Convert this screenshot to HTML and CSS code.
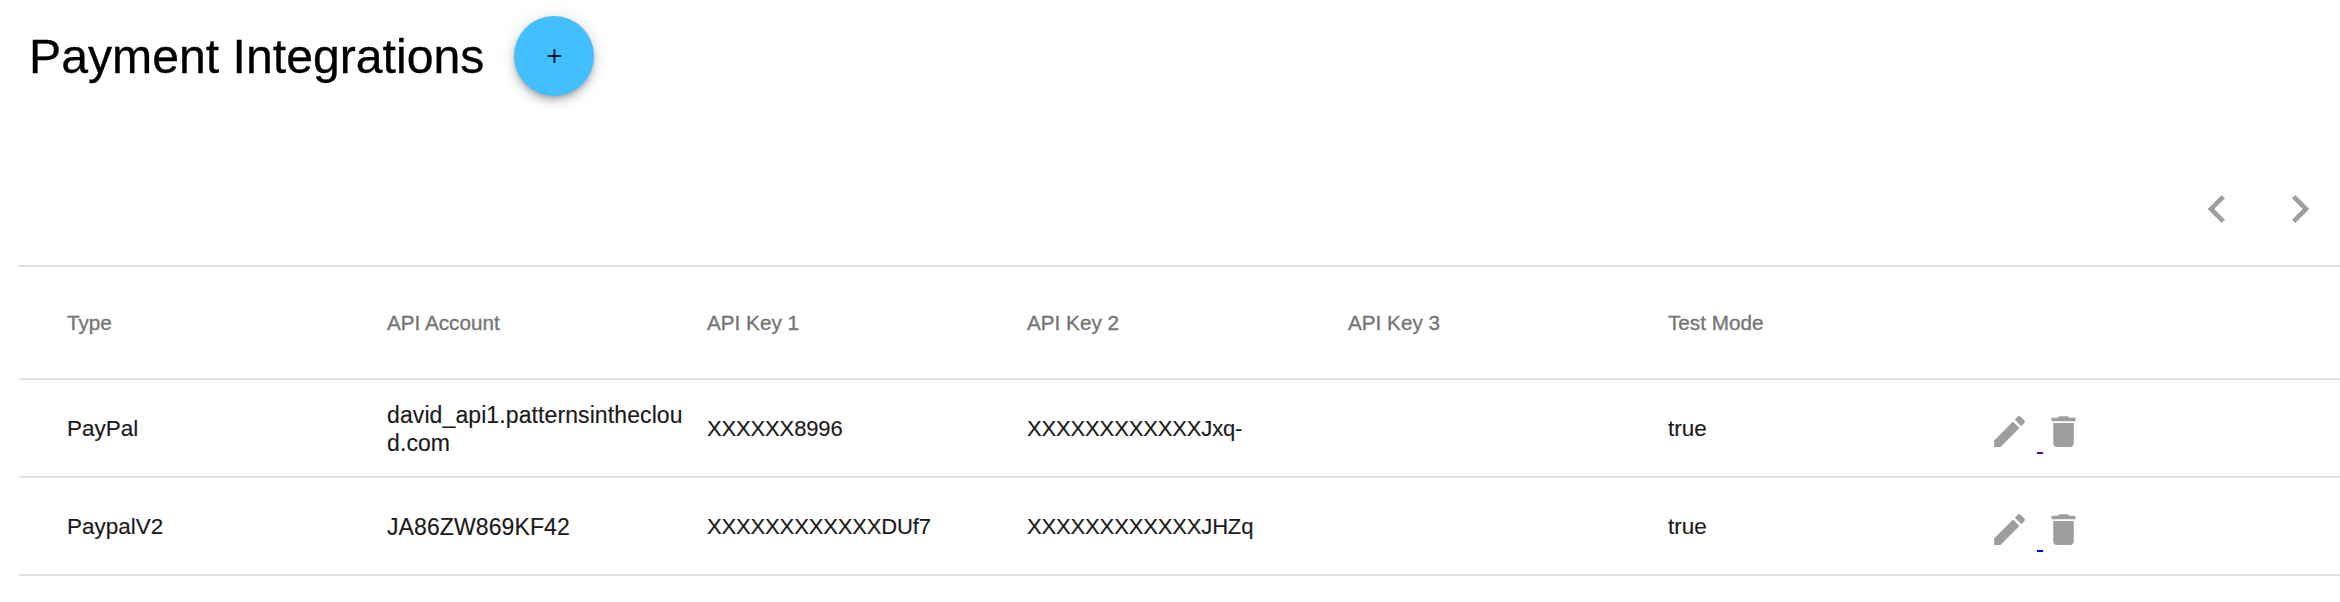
FILE: index.html
```html
<!DOCTYPE html>
<html lang="en">
<head>
    <meta charset="UTF-8">
    <meta name="viewport" content="width=device-width, initial-scale=1.0">
    <title>Payment Integrations</title>
    <link rel="stylesheet" href="styles.css">
</head>
<body>
    <div class="page">
        <div class="page-header">
            <h1>Payment Integrations</h1>
            <button class="fab">+</button>
        </div>
        <div class="pager">
            <svg class="pager-icon" viewBox="0 0 24 24"><path d="M15.41 7.41L14 6l-6 6 6 6 1.41-1.41L10.83 12z"/></svg>
            <svg class="pager-icon" viewBox="0 0 24 24"><path d="M10 6L8.59 7.41 13.17 12l-4.58 4.59L10 18l6-6z"/></svg>
        </div>
        <table class="integrations">
            <thead>
                <tr>
                    <th>Type</th>
                    <th>API Account</th>
                    <th>API Key 1</th>
                    <th>API Key 2</th>
                    <th>API Key 3</th>
                    <th>Test Mode</th>
                    <th></th>
                </tr>
            </thead>
            <tbody>
                <tr>
                    <td>PayPal</td>
                    <td class="account">david_api1.patternsinthecloud.com</td>
                    <td class="key">XXXXXX8996</td>
                    <td class="key">XXXXXXXXXXXXJxq-</td>
                    <td></td>
                    <td>true</td>
                    <td>
                        <div class="actions">
                            <svg class="action-icon" viewBox="0 0 24 24"><path d="M3 17.25V21h3.75L17.81 9.94l-3.75-3.75L3 17.25zM20.71 7.04c.39-.39.39-1.02 0-1.41l-2.34-2.34c-.39-.39-1.02-.39-1.41 0l-1.83 1.83 3.75 3.75 1.83-1.83z"/></svg>
                            <a class="action-link visited" href="#">&nbsp;</a>
                            <svg class="action-icon" viewBox="0 0 24 24"><path d="M6 19c0 1.1.9 2 2 2h8c1.1 0 2-.9 2-2V7H6v12zM19 4h-3.5l-1-1h-5l-1 1H5v2h14V4z"/></svg>
                        </div>
                    </td>
                </tr>
                <tr>
                    <td>PaypalV2</td>
                    <td class="account">JA86ZW869KF42</td>
                    <td class="key">XXXXXXXXXXXXDUf7</td>
                    <td class="key">XXXXXXXXXXXXJHZq</td>
                    <td></td>
                    <td>true</td>
                    <td>
                        <div class="actions">
                            <svg class="action-icon" viewBox="0 0 24 24"><path d="M3 17.25V21h3.75L17.81 9.94l-3.75-3.75L3 17.25zM20.71 7.04c.39-.39.39-1.02 0-1.41l-2.34-2.34c-.39-.39-1.02-.39-1.41 0l-1.83 1.83 3.75 3.75 1.83-1.83z"/></svg>
                            <a class="action-link" href="#">&nbsp;</a>
                            <svg class="action-icon" viewBox="0 0 24 24"><path d="M6 19c0 1.1.9 2 2 2h8c1.1 0 2-.9 2-2V7H6v12zM19 4h-3.5l-1-1h-5l-1 1H5v2h14V4z"/></svg>
                        </div>
                    </td>
                </tr>
            </tbody>
        </table>
    </div>
</body>
</html>
```
FILE: styles.css
```css
body {
    margin: 0;
    background-color: #fff;
    color: #000;
    font-family: "Liberation Sans", Arial, sans-serif;
}

.page {
    padding-left: 19px;
}

.page-header {
    display: flex;
    align-items: center;
    gap: 30px;
    height: 112px;
    padding-left: 10px;
}

.page-header h1 {
    margin: 0;
    font-size: 48.2px;
    font-weight: 400;
    -webkit-text-stroke: 0.3px #000;
}

.fab {
    width: 80px;
    height: 80px;
    padding: 0;
    border: none;
    border-radius: 50%;
    background-color: #42bfff;
    color: rgba(0, 0, 0, 0.87);
    font-family: inherit;
    font-size: 28px;
    box-shadow: 0 3px 5px -1px rgba(0, 0, 0, 0.2), 0 6px 10px 0 rgba(0, 0, 0, 0.14), 0 1px 18px 0 rgba(0, 0, 0, 0.12);
}

.pager {
    display: flex;
    justify-content: flex-end;
    gap: 27px;
    height: 153px;
    padding-right: 12px;
    padding-top: 69px;
    box-sizing: border-box;
}

.pager-icon {
    width: 56px;
    height: 56px;
    fill: #9e9e9e;
}

.integrations {
    width: 2321px;
    table-layout: fixed;
    border-collapse: collapse;
    border-top: 2px solid #e0e0e0;
}

.integrations th,
.integrations td {
    width: 320px;
    box-sizing: border-box;
    padding: 0 12px 0 0;
    border-bottom: 2px solid #e0e0e0;
    text-align: left;
    word-break: break-all;
}

.integrations td {
    padding-top: 1px;
}

.integrations th:first-child,
.integrations td:first-child {
    width: 368px;
    padding-left: 48px;
}

.integrations th:nth-child(4),
.integrations td:nth-child(4) {
    width: 321px;
}

.integrations th:last-child,
.integrations td:last-child {
    width: auto;
    padding: 0;
}

.integrations th {
    height: 113px;
    color: #757575;
    font-size: 20.7px;
    font-weight: 400;
    -webkit-text-stroke: 0.35px #757575;
}

.integrations td {
    height: 98px;
    font-size: 22.5px;
    line-height: 28px;
    color: #1a1a1a;
    -webkit-text-stroke: 0.15px #1a1a1a;
}

.integrations td.account {
    font-size: 23px;
    letter-spacing: 0.1px;
}

.integrations td.key {
    font-size: 22px;
    letter-spacing: -0.15px;
}

.actions {
    display: flex;
    align-items: flex-end;
    padding-left: 1px;
    padding-top: 6px;
}

.action-icon {
    width: 41px;
    height: 41px;
    fill: #9e9e9e;
}

.action-link {
    margin: 0 0 -3px 7px;
    font-size: 22px;
    line-height: 22px;
    color: #0000ee;
    text-decoration-thickness: 2px;
    -webkit-text-stroke: 0;
}

.action-link.visited {
    color: #551a8b;
}
```
